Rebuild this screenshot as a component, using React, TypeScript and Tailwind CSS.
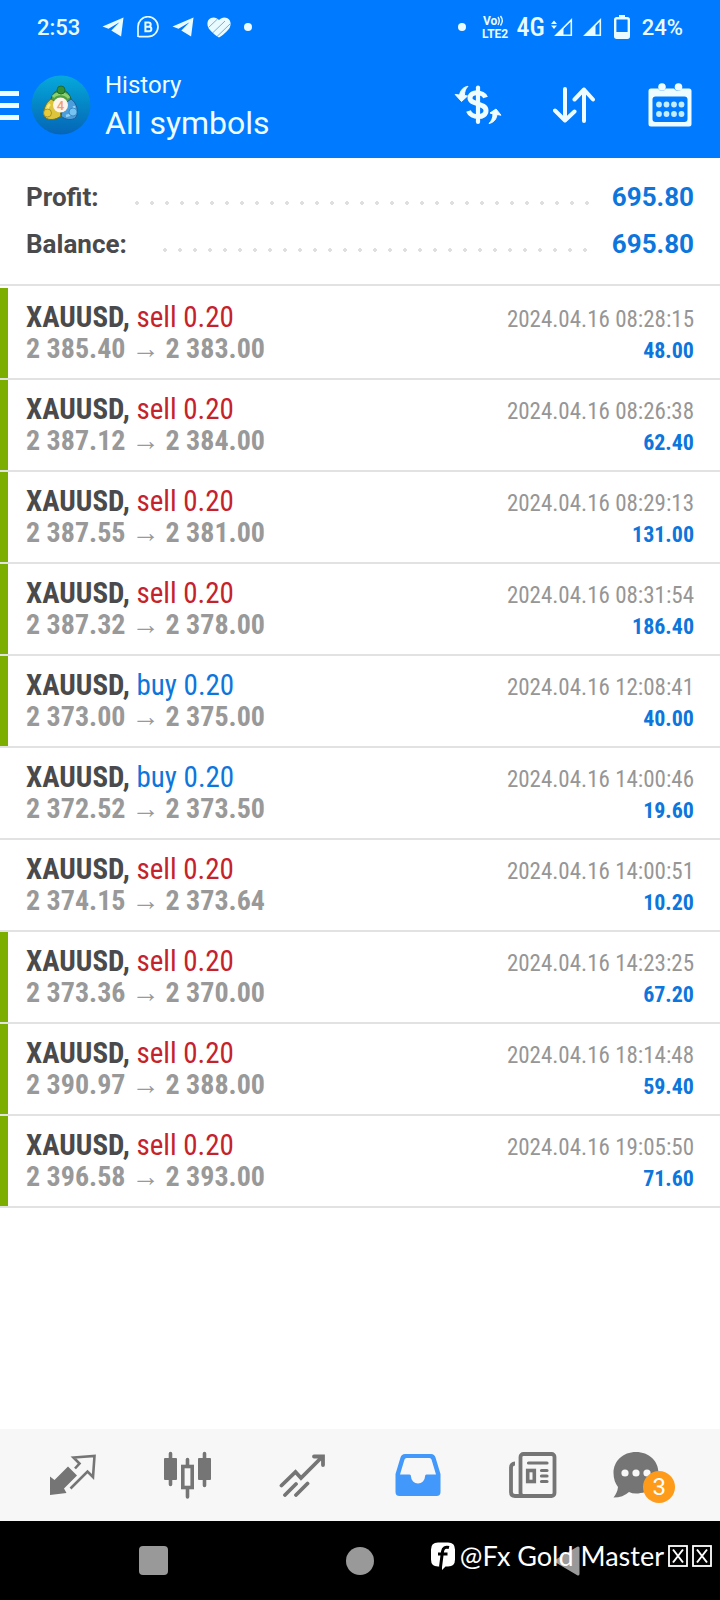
import React from 'react';

interface Deal {
    symbol: string;
    type: 'buy' | 'sell';
    volume: string;
    open: string;
    close: string;
    time: string;
    profit: string;
    marked: boolean;
}

const deals: Deal[] = [
    { symbol: 'XAUUSD', type: 'sell', volume: '0.20', open: '2 385.40', close: '2 383.00', time: '2024.04.16 08:28:15', profit: '48.00', marked: true },
    { symbol: 'XAUUSD', type: 'sell', volume: '0.20', open: '2 387.12', close: '2 384.00', time: '2024.04.16 08:26:38', profit: '62.40', marked: true },
    { symbol: 'XAUUSD', type: 'sell', volume: '0.20', open: '2 387.55', close: '2 381.00', time: '2024.04.16 08:29:13', profit: '131.00', marked: true },
    { symbol: 'XAUUSD', type: 'sell', volume: '0.20', open: '2 387.32', close: '2 378.00', time: '2024.04.16 08:31:54', profit: '186.40', marked: true },
    { symbol: 'XAUUSD', type: 'buy', volume: '0.20', open: '2 373.00', close: '2 375.00', time: '2024.04.16 12:08:41', profit: '40.00', marked: true },
    { symbol: 'XAUUSD', type: 'buy', volume: '0.20', open: '2 372.52', close: '2 373.50', time: '2024.04.16 14:00:46', profit: '19.60', marked: false },
    { symbol: 'XAUUSD', type: 'sell', volume: '0.20', open: '2 374.15', close: '2 373.64', time: '2024.04.16 14:00:51', profit: '10.20', marked: false },
    { symbol: 'XAUUSD', type: 'sell', volume: '0.20', open: '2 373.36', close: '2 370.00', time: '2024.04.16 14:23:25', profit: '67.20', marked: true },
    { symbol: 'XAUUSD', type: 'sell', volume: '0.20', open: '2 390.97', close: '2 388.00', time: '2024.04.16 18:14:48', profit: '59.40', marked: true },
    { symbol: 'XAUUSD', type: 'sell', volume: '0.20', open: '2 396.58', close: '2 393.00', time: '2024.04.16 19:05:50', profit: '71.60', marked: true },
];

const summary = [
    { label: 'Profit:', value: '695.80' },
    { label: 'Balance:', value: '695.80' },
];

const TelegramIcon = () => (
    <svg width="22" height="20" viewBox="0 0 22 20" fill="currentColor">
        <path d="M21.500.5.5 9.400l6 2.300L17.500 5.200 9.300 13.400l9.800 6z" />
    </svg>
);

const BusinessChatIcon = () => (
    <svg width="22" height="22" viewBox="0 0 22 22" fill="none" stroke="currentColor">
        <path d="M1 21V11A10 10 0 1 1 11 20.700H1.500" strokeWidth="1.700" />
        <path d="M8.400 6.500h3.200a2 2 0 0 1 0 4.200H8.400zM8.400 10.700h3.700a2.200 2.200 0 0 1 0 4.500H8.400z" strokeWidth="2" />
    </svg>
);

const HeartIcon = () => (
    <svg width="24" height="21" viewBox="0 0 24 21">
        <path d="M12 20.500C9 19 2.500 13.500 1.200 10.500-.5 6.500.5 2.500 4 1c3-1.200 6-.2 8 2 2-2.200 5-3.200 8-2 3.500 1.500 4.500 5.500 2.800 9.500C21.500 13.500 15 19 12 20.500z" fill="currentColor" />
        <path d="M1.500 10.500 10.500 2M5.500 16 18 4M10 19.500 23 7" stroke="#0b5cad" strokeWidth="0.500" />
    </svg>
);

const VolteIcon = () => (
    <svg width="28" height="24" viewBox="0 0 28 24" fill="currentColor" fontFamily="Roboto, sans-serif" fontWeight="700">
        <text x="1" y="10" fontSize="12">Vo</text>
        <text x="0" y="22.500" fontSize="12">LTE2</text>
        <path d="M16 2q2.500 3.500 0 8M18.500 1q3.500 4.500 0 9.500" fill="none" stroke="currentColor" strokeWidth="1.400" />
    </svg>
);

const SignalIcon = ({ data }: { data?: boolean }) => (
    <svg width={data ? 22 : 19} height="19" viewBox={data ? '0 0 22 19' : '3 0 19 19'}>
        <path d="M20.300 2v15.200H5z" fill="none" stroke="currentColor" strokeWidth="1.600" />
        <path d={data ? 'M4 18 12.500 9.500V18z' : 'M4 18 15.500 7V18z'} fill="currentColor" />
        {data && <path d="M0 6l3-3.500L6 6zM0 7.500l3 3.500 3-3.500z" fill="currentColor" />}
    </svg>
);

const BatteryIcon = () => (
    <svg width="16" height="24" viewBox="0 0 16 24">
        <rect x="5" y="0" width="6" height="4" fill="currentColor" />
        <rect x="1.200" y="3.200" width="13.600" height="19.600" rx="1.500" fill="none" stroke="currentColor" strokeWidth="2.400" />
        <rect x="2" y="17" width="12" height="6" fill="currentColor" />
    </svg>
);

const AppLogo = () => (
    <svg width="60" height="60" viewBox="0 0 60 60">
        <defs>
            <linearGradient id="logoBg" x1="0" y1="0" x2="0" y2="1">
                <stop offset="0" stopColor="#06a9dc" />
                <stop offset="0.5" stopColor="#0486c6" />
                <stop offset="1" stopColor="#0565b8" />
            </linearGradient>
        </defs>
        <circle cx="30" cy="30" r="29.500" fill="url(#logoBg)" />
        <path d="M19 29c1-9 5-14 11-14s10 5 11 14l-6 2H24z" fill="#4fa044" stroke="#1c6236" />
        <path d="M20 24c-6 4-9 13-6 18 3 4 11 3 16-1l-2-12z" fill="#dcc53c" stroke="#6e7324" />
        <path d="M40 24c6 4 8 13 5 18-3 4-11 3-15-1l3-12z" fill="#4c9edb" stroke="#1b5f9f" />
        <path d="M22 22c3-4 12-5 16 1" fill="none" stroke="#8dd06f" strokeWidth="3" />
        <path d="M19 29c-3 3-3 7-1 10" fill="none" stroke="#f5e87d" strokeWidth="2.500" />
        <path d="M43 31c1 5-2 9-8 10" fill="none" stroke="#93d2f7" strokeWidth="2.500" />
        <circle cx="30" cy="15" r="4" fill="#348f35" stroke="#1c6d38" />
        <circle cx="16.500" cy="38" r="4" fill="#e8cb36" stroke="#8a8030" strokeWidth="0.700" />
        <circle cx="42" cy="37" r="4" fill="#74c3f2" stroke="#2579b8" strokeWidth="0.700" />
        <circle cx="29.500" cy="30" r="7.500" fill="#fff4ea" />
        <text x="29.500" y="34.500" textAnchor="middle" fontFamily="Roboto, sans-serif" fontSize="13" fontWeight="500" fill="#f0a070">4</text>
    </svg>
);

const CurrencyIcon = () => (
    <svg width="48" height="40" viewBox="0 0 48 40" fill="none" stroke="currentColor">
        <path d="M31.500 12.500C29.500 7 16.500 5.500 16 13c-.3 6.500 16 5 16 12.500 0 8.500-15 7.500-17.500.5" strokeWidth="5" />
        <path d="M24 2.500v34.500" strokeWidth="4.200" strokeLinecap="round" />
        <path d="M14 1.300C9 2 6.500 5.500 5.500 10L1.200 9.500l6.300 7L13.500 11l-3-.5C10.500 6.500 11.500 3.500 14 1.300z" fill="currentColor" stroke="currentColor" strokeLinejoin="round" />
        <path d="M35 38.500C40 37.500 42.500 34 43 29.500l4 .7L42 24 36 28l3 1C39 33 37.500 36 35 38.500z" fill="currentColor" stroke="currentColor" strokeLinejoin="round" />
    </svg>
);

const SortIcon = () => (
    <svg width="42" height="36" viewBox="0 0 42 36" fill="none" stroke="currentColor" strokeWidth="4" strokeLinecap="round" strokeLinejoin="round">
        <path d="M12 2v31M2 23.500 12 33.500 21.500 24.500M31 34V2.500M21.500 12.500 31 2.500 40 12.500" />
    </svg>
);

const CalendarIcon = () => (
    <svg width="44" height="44" viewBox="0 0 44 44">
        <path d="M3 5.500h7a4.500 4.500 0 0 0 8 0h8a4.500 4.500 0 0 0 8 0h7q2.500 0 2.500 2.500v33q0 2.500-2.500 2.500H3Q.5 43.500.5 41V8Q.5 5.500 3 5.500z" fill="currentColor" />
        <rect x="4.500" y="13.500" width="35" height="25.500" rx="3" fill="#007aff" />
        <circle cx="14" cy="4" r="3.800" fill="currentColor" />
        <circle cx="30.500" cy="4" r="3.800" fill="currentColor" />
        {[11, 18.5, 26, 33.5].map(x => (
            <g key={x} fill="#c4ecff">
                <circle cx={x} cy="21.500" r="2.900" />
                <circle cx={x} cy="31" r="2.900" />
            </g>
        ))}
    </svg>
);

const QuotesIcon = () => (
    <svg width="48" height="42" viewBox="0 0 48 42">
        <path d="M2 22.500 6.500 26 20 12.500l9 9-13 13 2.500 4.500L2 41z" fill="currentColor" />
        <path d="M27 14.500 31.500 9.500 25.500 3.500 46.500 2 45 23 39.500 17.500 22.500 34.500" fill="none" stroke="currentColor" strokeWidth="2.600" />
    </svg>
);

const ChartIcon = () => (
    <svg width="48" height="48" viewBox="0 0 48 48" fill="none" stroke="currentColor">
        <path d="M7.500 2.500v31M41.500 2.500v32M24.500 8.500v6M24.500 38v8" strokeWidth="3.600" strokeLinecap="round" />
        <rect x="1" y="7" width="13" height="22" rx="1" fill="currentColor" stroke="none" />
        <rect x="35" y="7" width="13" height="22" rx="1" fill="currentColor" stroke="none" />
        <rect x="19.800" y="15.500" width="9.400" height="21" strokeWidth="3.600" />
    </svg>
);

const TradeIcon = () => (
    <svg width="46" height="43" viewBox="0 0 46 43" fill="none" stroke="currentColor" strokeWidth="3.800" strokeLinecap="round">
        <path d="M2.500 31.500 16.500 18l5.500 6L43.500 2.500M35 2.500h9V11M6 41 17 30M17 41 28.500 29.500" />
    </svg>
);

const HistoryIcon = () => (
    <svg width="46" height="42" viewBox="0 0 46 42">
        <path d="M10 0h26q3.500 0 4.500 3.500L45.500 20v18q0 4-4 4h-37q-4 0-4-4V20L5.500 3.500Q6.500 0 10 0z" fill="currentColor" />
        <path d="M11.500 4h23q1.500 0 2 1.500l4.500 15H31.500q-1.500 0-1.500 2a7 7 0 0 1-14 0q0-2-1.500-2H5l4.500-15q.5-1.500 2-1.500z" fill="#f7f7f7" />
    </svg>
);

const NewsIcon = () => (
    <svg width="48" height="46" viewBox="0 0 48 46" fill="none" stroke="currentColor">
        <rect x="11.500" y="2" width="34" height="42" rx="3" strokeWidth="3.800" />
        <path d="M6 11.500q-4 0-4 4V40q0 4 4 4h9" strokeWidth="3.800" />
        <path d="M19.500 11h18.500M32.500 18.500h5.500M32.500 24h5.500M32.500 29.500h5.500" strokeWidth="3.200" strokeLinecap="round" />
        <rect x="18.700" y="18.500" width="6.600" height="11" strokeWidth="3.600" />
    </svg>
);

const ChatIcon = () => (
    <svg width="46" height="46" viewBox="0 0 46 46">
        <path d="M23 0C36 0 45.500 9 45.500 21S36 41.500 23 41.500q-4 0-7-1.500-6 5.500-15.500 5.500 4-5 4.500-10.500Q.5 29 .5 21C.5 9 10 0 23 0z" fill="currentColor" />
        <g fill="#f7f7f7">
            <circle cx="12" cy="21" r="3.600" />
            <circle cx="23" cy="21" r="3.600" />
            <circle cx="34" cy="21" r="3.600" />
        </g>
    </svg>
);

const tabs = [
    { name: 'Quotes', icon: <QuotesIcon /> },
    { name: 'Charts', icon: <ChartIcon /> },
    { name: 'Trade', icon: <TradeIcon /> },
    { name: 'History', icon: <HistoryIcon />, active: true },
    { name: 'News', icon: <NewsIcon /> },
    { name: 'Messages', icon: <ChatIcon />, badge: 3 },
];

const StatusBar = () => (
    <div className="flex h-[54px] items-center justify-between px-[37px] text-[22px] font-medium text-[#e9fbff]">
        <div className="flex items-center">
            <span>2:53</span>
            <div className="ml-[22px] flex items-center gap-[13px]">
                <TelegramIcon />
                <BusinessChatIcon />
                <TelegramIcon />
                <HeartIcon />
                <span className="size-2 rounded-full bg-current" />
            </div>
        </div>
        <div className="flex items-center">
            <span className="size-2 rounded-full bg-current" />
            <div className="ml-4 flex items-center gap-[6px]">
                <VolteIcon />
                <span className="font-['Roboto_Condensed',Roboto,sans-serif] text-[26px] leading-8">4G</span>
                <SignalIcon data />
            </div>
            <div className="mr-3 ml-[10px] flex items-center gap-3">
                <SignalIcon />
                <BatteryIcon />
            </div>
            <span>24%</span>
        </div>
    </div>
);

const Header = () => (
    <header className="bg-[#007aff] text-[#effcff]">
        <StatusBar />
        <div className="flex h-[104px] items-center pr-[26px] pb-0.5">
            <button aria-label="Menu" className="flex w-[19px] flex-col gap-[7px]">
                <span className="h-[5px] bg-current" />
                <span className="h-[5px] bg-current" />
                <span className="h-[5px] bg-current" />
            </button>
            <div className="ml-3">
                <AppLogo />
            </div>
            <div className="ml-[14px] flex flex-1 flex-col">
                <p className="text-2xl leading-9">History</p>
                <h1 className="text-[32px] leading-10">All symbols</h1>
            </div>
            <div className="flex gap-12">
                <button aria-label="Currency" className="flex size-12 items-center justify-center"><CurrencyIcon /></button>
                <button aria-label="Sort" className="flex size-12 items-center justify-center"><SortIcon /></button>
                <button aria-label="Period" className="flex size-12 items-center justify-center"><CalendarIcon /></button>
            </div>
        </div>
    </header>
);

const DealRow = ({ deal }: { deal: Deal }) => (
    <li className="flex border-b-2 border-[#e2e2e2]">
        <div className={`w-2 shrink-0 ${deal.marked ? 'bg-[#7cae00]' : ''}`} />
        <div className="flex-1 py-[13px] pr-[26px] pl-[18px] font-['Roboto_Condensed',Roboto,sans-serif] leading-8">
            <div className="flex h-8 items-baseline justify-between">
                <p className="text-[29px] leading-8 text-[#4a4a4c]">
                    <span className="font-bold">{deal.symbol},</span>{' '}
                    <span className={deal.type === 'sell' ? 'text-[#c4232b]' : 'text-[#0d76dc]'}>
                        {deal.type} {deal.volume}
                    </span>
                </p>
                <p className="text-[23px] leading-8 text-[#969696]">{deal.time}</p>
            </div>
            <div className="flex h-8 items-baseline justify-between font-bold">
                <p className="flex items-baseline gap-[6px] text-[28px] leading-8 text-[#999]">
                    <span>{deal.open}</span>
                    <span className="font-normal">→</span>
                    <span>{deal.close}</span>
                </p>
                <p className="text-[22px] leading-8 text-[#0d76dc]">{deal.profit}</p>
            </div>
        </div>
    </li>
);

const TabBar = () => (
    <nav className="flex h-[92px] items-center bg-[#f7f7f7] px-[14px]">
        {tabs.map(tab => (
            <button
                key={tab.name}
                aria-label={tab.name}
                className={`flex flex-1 justify-center ${tab.active ? 'text-[#4299fb]' : 'text-[#757575]'}`}
            >
                {tab.badge ? (
                    <span className="relative flex w-[70px]">
                        {tab.icon}
                        <span className="absolute top-[19px] left-[30px] flex size-8 items-center justify-center rounded-full bg-[#ff9b1a] text-2xl leading-8 text-white">
                            {tab.badge}
                        </span>
                    </span>
                ) : tab.icon}
            </button>
        ))}
    </nav>
);

// Placeholder box for a character the font has no glyph for
const MissingGlyph = () => (
    <svg width="20" height="22" viewBox="0 0 20 22" fill="none" stroke="currentColor">
        <rect x="1" y="1" width="18" height="20" strokeWidth="1.800" />
        <path d="M5 4.500 15 17.500M15 4.500 5 17.500" strokeWidth="2" />
    </svg>
);

const Watermark = () => (
    <div className="absolute top-[19px] right-2 flex items-center text-white">
        <svg width="26" height="28" viewBox="0 0 26 28" className="mr-1">
            <path d="M8 .5h10q7 0 7 7v10q0 7-7 7h-2.500l-3.500 3.500v-3.500H8q-7 0-7-7v-10q0-7 7-7z" fill="currentColor" />
            <path d="M19 5.500q-5.500-1.500-6.500 4L10.500 25M8 12h9.500" fill="none" stroke="#000" strokeWidth="3" />
        </svg>
        <span className="font-[Lato,sans-serif] text-[27px] leading-8">@Fx Gold Master</span>
        <span className="ml-1 flex gap-1">
            <MissingGlyph />
            <MissingGlyph />
        </span>
    </div>
);

const SystemNav = () => (
    <div className="relative flex h-[79px] items-center bg-black px-[50px]">
        <button aria-label="Recent apps" className="flex flex-1 justify-center">
            <span className="size-[29px] rounded bg-[#999]" />
        </button>
        <button aria-label="Home" className="flex flex-1 justify-center">
            <span className="size-7 rounded-full bg-[#999]" />
        </button>
        <button aria-label="Back" className="flex flex-1 justify-center">
            <svg width="26" height="30" viewBox="0 0 26 30">
                <path d="M24 2v26L2 15z" fill="#999" stroke="#999" strokeWidth="3" strokeLinejoin="round" />
            </svg>
        </button>
        <Watermark />
    </div>
);

export default function App() {
    return (
        <div className="flex min-h-screen flex-col bg-white font-[Roboto,sans-serif]">
            <Header />
            <main className="flex-1">
                <dl className="border-b-2 border-[#e2e2e2] px-[26px] py-4 text-[26px] font-bold">
                    {summary.map(row => (
                        <div key={row.label} className="flex h-[47px] items-center">
                            <dt className="text-[#4a4a4c]">{row.label}</dt>
                            <div className="mt-[10px] mr-4 ml-9 h-1 flex-1 bg-[radial-gradient(circle_at_2px_2px,#dfdfdf_2px,transparent_2px)] bg-[length:15px_4px]" />
                            <dd className="text-[#0d76dc]">{row.value}</dd>
                        </div>
                    ))}
                </dl>
                <ul className="pt-0.5">
                    {deals.map(deal => (
                        <DealRow key={deal.time} deal={deal} />
                    ))}
                </ul>
            </main>
            <TabBar />
            <SystemNav />
        </div>
    );
}
